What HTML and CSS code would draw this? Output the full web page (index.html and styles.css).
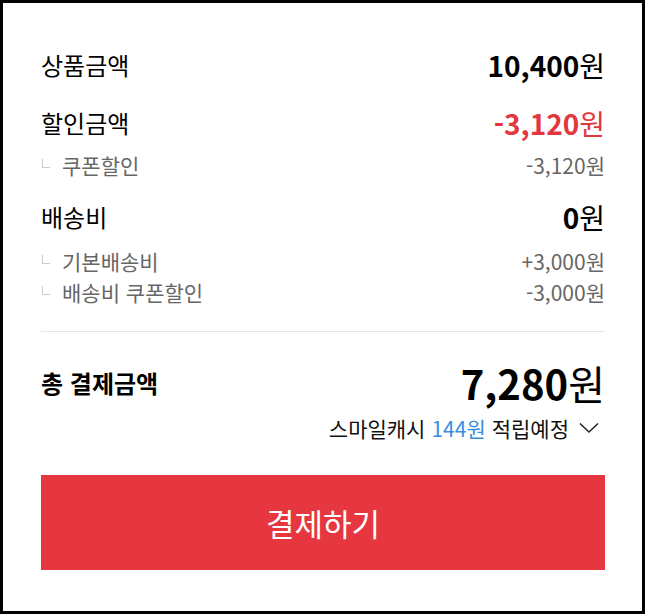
FILE: index.html
```html
<!DOCTYPE html>
<html lang="ko">
<head>
    <meta charset="UTF-8">
    <meta name="viewport" content="width=device-width, initial-scale=1.0">
    <title>결제금액</title>
    <link rel="stylesheet" href="styles.css">
</head>
<body>
    <div class="panel">
        <div class="row main first">
            <span class="label">상품금액</span>
            <span class="price"><b>10,400</b>원</span>
        </div>
        <div class="row main gap">
            <span class="label">할인금액</span>
            <span class="price red"><b>-3,120</b>원</span>
        </div>
        <div class="row sub first-sub">
            <span class="label"><i class="tree"></i>쿠폰할인</span>
            <span class="price">-3,120원</span>
        </div>
        <div class="row main gap-sm">
            <span class="label">배송비</span>
            <span class="price"><b>0</b>원</span>
        </div>
        <div class="row sub ship-sub">
            <span class="label"><i class="tree"></i>기본배송비</span>
            <span class="price">+3,000원</span>
        </div>
        <div class="row sub">
            <span class="label"><i class="tree"></i>배송비 쿠폰할인</span>
            <span class="price">-3,000원</span>
        </div>
        <hr class="divider">
        <div class="row total">
            <span class="label">총 결제금액</span>
            <span class="price"><b>7,280</b>원</span>
        </div>
        <div class="cash">
            스마일캐시 <span class="blue">144원</span> 적립예정
            <svg class="chevron" width="20" height="12" viewBox="0 0 20 12">
                <path d="M1 1.5 L10 10 L19 1.5" fill="none" stroke="#222" stroke-width="1.5"/>
            </svg>
        </div>
        <button class="pay-btn" type="button">결제하기</button>
    </div>
</body>
</html>
```

FILE: styles.css
```css
*{
    padding: 0;
    margin: 0;
    box-sizing: border-box;
}
body {
    font-family: "Noto Sans CJK KR", "Noto Sans", sans-serif;
    color: #000;
    background: #fff;
}
.panel {
    width: 645px;
    height: 614px;
    border: 3px solid #000;
    padding: 45px 37px 0 38px;
    display: flex;
    flex-direction: column;
}
.row {
    display: flex;
    justify-content: space-between;
    align-items: center;
}
.main {
    font-size: 24px;
    line-height: 34px;
}
.main .price {
    font-size: 28px;
}
.main .price b {
    font-weight: 700;
}
.gap {
    margin-top: 24px;
}
.gap-sm {
    margin-top: 19px;
}
.red {
    color: #e4363f;
}
.sub {
    font-size: 21px;
    line-height: 31px;
    color: #666;
}
.first-sub {
    margin-top: 10px;
}
.ship-sub {
    margin-top: 12px;
}
.sub .label {
    display: flex;
    align-items: center;
}
.tree {
    display: inline-block;
    width: 8px;
    height: 9px;
    border-left: 1px solid #ccc;
    border-bottom: 1px solid #ccc;
    margin: 0 12px 4px 1px;
}
.divider {
    border: none;
    border-top: 1px solid #e6e6e6;
    margin-top: 23px;
}
.total {
    margin-top: 27px;
    line-height: 48px;
}
.total .label {
    font-size: 24px;
    font-weight: 700;
}
.total .price {
    font-size: 40px;
}
.total .price b {
    font-weight: 700;
}
.cash {
    margin-top: 9px;
    align-self: flex-end;
    font-size: 21px;
    line-height: 24px;
    color: #111;
    display: flex;
    align-items: center;
    margin-right: 6px;
}
.blue {
    color: #3a8ee0;
    margin: 0 6px;
}
.chevron {
    margin-left: 10px;
}
.pay-btn {
    margin-top: 35px;
    width: 100%;
    height: 95px;
    background: #e63741;
    color: #fff;
    border: none;
    font-family: inherit;
    font-size: 31px;
    cursor: pointer;
}
```
